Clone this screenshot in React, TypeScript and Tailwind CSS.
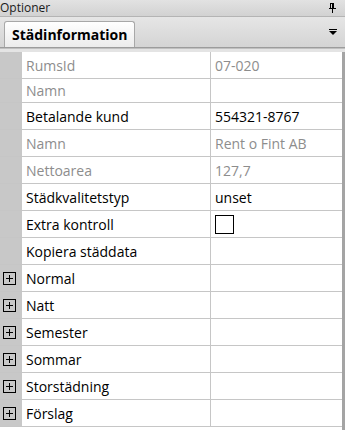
import React from 'react'

type Row = {
  label: string
  value?: string
  muted?: boolean
  expand?: boolean
  check?: boolean
  h: string
}

const rows: Row[] = [
  { label: 'RumsId', value: '07-020', muted: true, h: 'h-[27px]' },
  { label: 'Namn', value: '', muted: true, h: 'h-[24px]' },
  { label: 'Betalande kund', value: '554321-8767', h: 'h-[27px]' },
  { label: 'Namn', value: 'Rent o Fint AB', muted: true, h: 'h-[27px]' },
  { label: 'Nettoarea', value: '127,7', muted: true, h: 'h-[27px]' },
  { label: 'Städkvalitetstyp', value: 'unset', h: 'h-[27px]' },
  { label: 'Extra kontroll', check: true, h: 'h-[27px]' },
  { label: 'Kopiera städdata', h: 'h-[27px]' },
  { label: 'Normal', expand: true, h: 'h-[27px]' },
  { label: 'Natt', expand: true, h: 'h-[27px]' },
  { label: 'Semester', expand: true, h: 'h-[27px]' },
  { label: 'Sommar', expand: true, h: 'h-[27px]' },
  { label: 'Storstädning', expand: true, h: 'h-[27px]' },
  { label: 'Förslag', expand: true, h: 'h-[27px]' },
]

function PlusBox() {
  return (
    <svg width="13" height="13" viewBox="0 0 13 13" className="block">
      <rect x="0.5" y="0.5" width="12" height="12" fill="none" stroke="#000" />
      <path d="M3 6.5h7M6.5 3v7" stroke="#000" strokeWidth="1" shapeRendering="crispEdges" />
    </svg>
  )
}

export default function App() {
  return (
    <div
      className="w-[345px] h-[430px] overflow-hidden bg-[#d6d6d6] flex flex-col"
      style={{ fontFamily: '"Open Sans", "Liberation Sans", Arial, sans-serif' }}
    >
      {/* title bar */}
      <div className="h-[17px] shrink-0 flex items-center justify-between bg-gradient-to-b from-[#e2e2e2] to-[#d2d2d2] border-b border-[#b4b4b4] pr-[9px]">
        <span className="text-[12px] leading-none text-[#1a1a1a]">Optioner</span>
        <svg width="8" height="10" viewBox="0 0 8 10">
          <path d="M2 0.5h4M2.5 0.5v5M5.5 0.5v5M4.5 0.5v5M0.5 5.5h7M4 5.5v4" stroke="#000" fill="none" shapeRendering="crispEdges" />
        </svg>
      </div>

      {/* tab strip */}
      <div className="h-[31px] shrink-0 flex items-end justify-between bg-gradient-to-b from-[#e6e6e6] to-[#d4d4d4] border-b border-[#9c9c9c] pl-[4px] pr-[8px]">
        <div className="h-[26px] w-[131px] rounded-t-[3px] border border-b-0 border-[#a8a8a8] bg-gradient-to-b from-white to-[#ececec] flex items-center pl-[7px]">
          <span className="text-[14px] font-bold text-black leading-none">Städinformation</span>
        </div>
        <svg width="8" height="7" viewBox="0 0 8 7" className="mb-[11px]">
          <path d="M0 0.5h8" stroke="#000" shapeRendering="crispEdges" />
          <path d="M0 2h8L4 6z" fill="#000" />
        </svg>
      </div>

      <div className="h-[4px] shrink-0 bg-[#e4e4e4] border-t border-[#c0c0c0]" />

      {/* property grid */}
      <div className="flex-1 flex bg-white">
        <div className="flex-1 flex flex-col">
          {rows.map((r, i) => (
            <div key={i} className={`${r.h} shrink-0 flex border-b border-[#c6c6c6]`}>
              <div className="w-[22px] shrink-0 bg-[#c8c8c8] flex items-center pl-[3px]">
                {r.expand && <PlusBox />}
              </div>
              <div
                className={`w-[188px] shrink-0 flex items-center pl-[4px] text-[14px] ${
                  r.muted ? 'text-[#8d8d8d]' : 'text-black'
                }`}
              >
                {r.label}
              </div>
              <div
                className={`flex-1 flex items-center pl-[4px] border-l border-[#c6c6c6] text-[14px] ${
                  r.muted ? 'text-[#8d8d8d]' : 'text-black'
                }`}
              >
                {r.check ? <div className="w-[19px] h-[19px] border border-black bg-white" /> : r.value}
              </div>
            </div>
          ))}
        </div>
        <div className="w-[3px] shrink-0 bg-[#a4a4a4]" />
      </div>
    </div>
  )
}
